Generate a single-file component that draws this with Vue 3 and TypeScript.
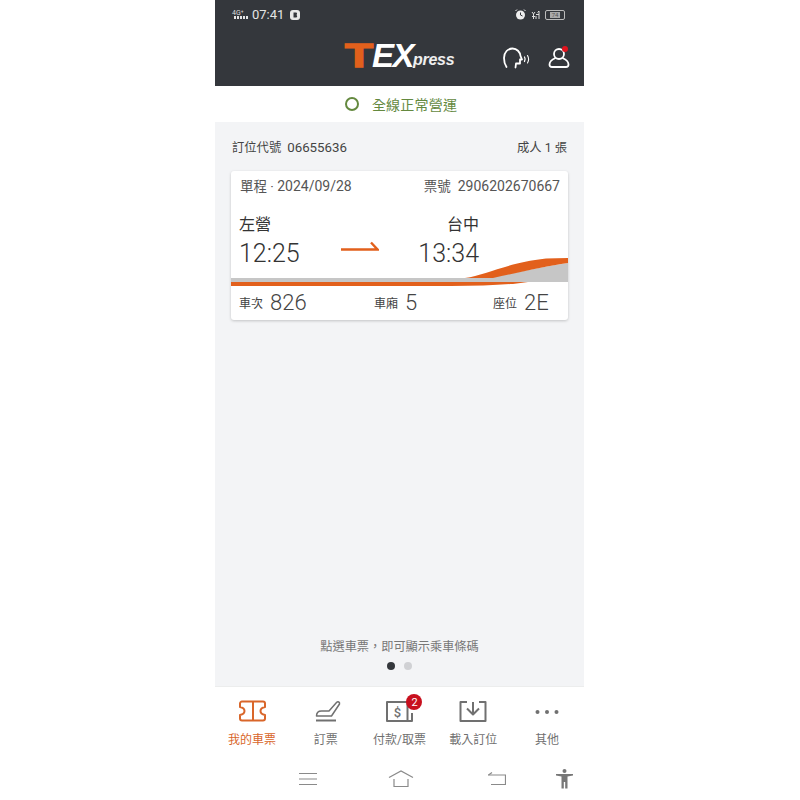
<script setup lang="ts">
const tabs = [
  { key: 'ticket', label: '我的車票', active: true },
  { key: 'seat', label: '訂票', active: false },
  { key: 'pay', label: '付款/取票', active: false, badge: 2 },
  { key: 'import', label: '載入訂位', active: false },
  { key: 'more', label: '其他', active: false },
];
</script>

<template>
  <div class="page">
    <div class="phone">
      <header class="header">
        <div class="status">
          <div class="status__left">
            <span class="signal">
              <span class="signal__net">4G⁺</span>
              <span class="signal__bars"><i></i><i></i><i></i><i></i><i></i></span>
            </span>
            <span class="status__time">07:41</span>
            <svg width="10" height="10" viewBox="0 0 10 10">
              <rect x="0" y="0" width="10" height="10" rx="3" fill="#e8e8e8" />
              <path d="M3.5 2.5h2.4a1.2 1.2 0 0 1 0 2.4 1.3 1.3 0 0 1 0 2.6H3.5z" fill="#34373c" />
            </svg>
          </div>
          <div class="status__right">
            <svg width="11" height="11" viewBox="0 0 11 11">
              <circle cx="5.5" cy="6" r="4.5" fill="#eee" />
              <path d="M5.5 3.5V6l2 1" stroke="#34373c" stroke-width="1" fill="none" />
              <path d="M0.5 2L2 .5M10.5 2L9 .5" stroke="#eee" stroke-width="1" />
            </svg>
            <svg width="9" height="11" viewBox="0 0 9 11" stroke="#ddd" stroke-width="1" fill="none">
              <path d="M1 3L2.5 5 4 3M2.5 5v5M5 10V7M8 10V2M6.500 3.500L8 2" />
              <path d="M5 5.500h3M1 7.500h3" />
            </svg>
            <span class="battery"><span class="battery__level">74</span></span>
          </div>
        </div>
        <div class="topbar">
          <div class="logo">
            <span class="logo__t">T</span>
            <span class="logo__ex">EX</span>
            <span class="logo__press">press</span>
          </div>
          <div class="topbar__actions">
            <svg width="27" height="22" viewBox="0 0 27 22" fill="none" stroke="#fff" stroke-width="1.800" stroke-linecap="round" stroke-linejoin="round">
              <path d="M3.500 20C1.500 17 1 14 1 11 1 5 5 1.500 9.500 1.500 14 1.500 17 5 17.500 9L19 12.500H17V16.500H13L12.500 20.500" />
              <path d="M21.500 10c.8 1.300.8 3 0 4.500" stroke-width="1.300" />
              <path d="M24.500 8.500c1.300 2.200 1.300 5.300 0 7.500" stroke-width="1.100" />
            </svg>
            <span class="user">
              <svg width="22" height="22" viewBox="0 0 22 22" fill="none" stroke="#fff" stroke-width="1.800">
                <circle cx="11" cy="7" r="5" />
                <path d="M7.500 11c-3.500 1.500-6 4-6 6.500 0 1.500.8 2.500 2.500 2.500h14c1.700 0 2.500-1 2.500-2.500 0-2.500-2.500-5-6-6.500" />
              </svg>
              <i class="user__dot"></i>
            </span>
          </div>
        </div>
      </header>

      <div class="notice">
        <span class="notice__ring"></span>
        <span class="notice__text">全線正常營運</span>
      </div>

      <main class="content">
        <div class="summary">
          <span>訂位代號<b class="num summary__code">06655636</b></span>
          <span>成人 <b class="num">1</b> 張</span>
        </div>

        <section class="card">
          <div class="card__head">
            <span>單程 · <b class="num">2024/09/28</b></span>
            <span>票號<b class="num card__ticket">2906202670667</b></span>
          </div>
          <div class="route">
            <div class="route__stop">
              <div class="route__name">左營</div>
              <div class="route__time">12:25</div>
            </div>
            <svg class="route__arrow" width="38" height="10" viewBox="0 0 38 10" fill="none">
              <path d="M0 8.500H36.500L30 1.500" stroke="#e2601c" stroke-width="2.400" />
            </svg>
            <div class="route__stop route__stop--end">
              <div class="route__name">台中</div>
              <div class="route__time">13:34</div>
            </div>
          </div>
          <div class="stripe">
            <svg width="337" height="32" viewBox="0 0 337 32">
              <rect x="0" y="23" width="337" height="4" fill="#c6c6c6" />
              <path d="M250 24C290 17 315 11 337 8V27H250Z" fill="#c6c6c6" />
              <path d="M0 27H297Q270 31 220 31H0Z" fill="#e2601c" />
              <path d="M234 23C255 20 275 8 315 3.500Q325 3 337 3V8C315 11 290 17 262 23Z" fill="#e2601c" />
            </svg>
          </div>
          <div class="card__foot">
            <span class="seat seat--car"><small>車次</small><b>826</b></span>
            <span class="seat seat--coach"><small>車廂</small><b>5</b></span>
            <span class="seat"><small>座位</small><b>2E</b></span>
          </div>
        </section>

        <div class="spacer"></div>
        <p class="hint">點選車票，即可顯示乘車條碼</p>
        <div class="dots">
          <i class="dots__dot dots__dot--on"></i>
          <i class="dots__dot"></i>
        </div>
      </main>

      <nav class="tabs">
        <div v-for="tab in tabs" :key="tab.key" class="tab" :class="{ 'tab--active': tab.active }">
          <span class="tab__icon">
            <svg width="30" height="24" viewBox="0 0 30 24" fill="none" stroke="currentColor" stroke-width="2" stroke-linejoin="round">
              <template v-if="tab.key === 'ticket'">
                <path d="M5 2.500H26a2 2 0 0 1 2 2V8c-6 1-6 7 0 8v3.500a2 2 0 0 1-2 2H5a2 2 0 0 1-2-2V16c6-1 6-7 0-8V4.500a2 2 0 0 1 2-2Z" />
                <path d="M16 2.500V21.500" />
              </template>
              <template v-else-if="tab.key === 'seat'">
                <path d="M5.500 17c0-3 2-5 5-5H18L25.500 3.500c1.500-1.500 3.500-.3 3 1.500L20.500 17Z" stroke-width="1.500" />
                <path d="M5 21.500H25" />
              </template>
              <template v-else-if="tab.key === 'pay'">
                <path d="M24 3H3V22H28V14" />
                <path d="M23.500 3V22" />
                <text x="13.500" y="17.500" class="tab__dollar">$</text>
              </template>
              <template v-else-if="tab.key === 'import'">
                <path d="M9 3H2.500V22H27.500V3H21" />
                <path d="M15 3V15M9 9.500L15 15.500L21 9.500" />
              </template>
              <template v-else>
                <circle cx="5.500" cy="13" r="2" fill="currentColor" stroke="none" />
                <circle cx="15" cy="13" r="2" fill="currentColor" stroke="none" />
                <circle cx="24.500" cy="13" r="2" fill="currentColor" stroke="none" />
              </template>
            </svg>
            <span v-if="tab.badge" class="tab__badge">{{ tab.badge }}</span>
          </span>
          <span class="tab__label">{{ tab.label }}</span>
        </div>
      </nav>

      <div class="sysnav">
        <svg class="sysnav__menu" width="18" height="14" viewBox="0 0 18 14" stroke="#8a8a8a" stroke-width="1.200">
          <path d="M0 1.500H18M0 7H18M0 12.500H18" />
        </svg>
        <svg class="sysnav__home" width="26" height="18" viewBox="0 0 26 18" fill="none" stroke="#8a8a8a" stroke-width="1.200">
          <path d="M1 7.500L13 1L25 7.500" />
          <path d="M6 9V16.500H20V9" />
        </svg>
        <svg class="sysnav__back" width="18" height="14" viewBox="0 0 18 14" fill="none" stroke="#8a8a8a" stroke-width="1.200">
          <path d="M0 3H17.500V12.500H3" />
          <path d="M4 .5L.5 3" />
        </svg>
        <svg class="sysnav__access" width="17" height="20" viewBox="0 0 17 20" fill="#777">
          <circle cx="8.500" cy="2" r="2" />
          <path d="M0 5H17V6.500L11.500 7.500V19.500H9.200V13H7.800V19.500H5.500V7.500L0 6.500Z" />
        </svg>
      </div>
    </div>
  </div>
</template>

<style scoped>
.page {
  display: flex;
  justify-content: center;
  width: 800px;
  height: 800px;
  background: #fff;
  font-family: Roboto, "Noto Sans CJK TC", sans-serif;
}

.phone {
  display: flex;
  flex-direction: column;
  width: 369px;
  height: 800px;
  margin-right: 1px;
}

.header {
  height: 86px;
  background: #34373c;
  color: #fff;
}

.status {
  display: flex;
  align-items: center;
  justify-content: space-between;
  height: 29px;
  padding: 0 19px 0 17px;
}

.status__left,
.status__right {
  display: flex;
  align-items: center;
}

.status__left {
  gap: 4px;
}

.status__right {
  gap: 5px;
}

.status__time {
  margin-right: 2px;
  font-size: 13px;
  color: #e4e4e4;
}

.signal {
  display: flex;
  flex-direction: column;
  width: 16px;
  line-height: 6px;
}

.signal__net {
  font-size: 7px;
  color: #ddd;
}

.signal__bars {
  display: flex;
  gap: 1px;
  justify-content: flex-end;
}

.signal__bars i {
  width: 2px;
  height: 3px;
  background: #e4e4e4;
}

.battery {
  display: flex;
  align-items: center;
  justify-content: center;
  width: 18px;
  height: 8px;
  border: 1px solid #bbb;
  border-radius: 2px;
}

.battery__level {
  font-size: 6px;
  line-height: 6px;
  padding: 0 2px;
  background: #aaa;
  color: #555;
}

.topbar {
  display: flex;
  align-items: center;
  height: 57px;
  padding: 0 14px 0 130px;
}

.topbar__actions {
  display: flex;
  align-items: center;
  gap: 18px;
  margin-left: auto;
}

.logo {
  display: flex;
  align-items: baseline;
  align-self: flex-start;
  height: 28px;
  margin-top: 12px;
  font-family: "Liberation Sans", sans-serif;
  font-style: italic;
  font-weight: 700;
}

.logo__t {
  display: inline-block;
  width: 27px;
  font-size: 34px;
  line-height: 28px;
  font-style: normal;
  font-weight: 700;
  color: #e2601c;
  -webkit-text-stroke: 1.5px #e2601c;
  transform: scaleX(1.350);
  transform-origin: left;
}

.logo__ex {
  font-size: 33px;
  line-height: 28px;
  letter-spacing: -1.5px;
  color: #fff;
}

.logo__press {
  margin-left: 0;
  font-size: 16px;
  line-height: 28px;
  letter-spacing: -0.3px;
  color: #eee;
  transform: translateY(-2px);
}

.user {
  position: relative;
  display: flex;
}

.user__dot {
  position: absolute;
  top: -1px;
  right: 2px;
  width: 6px;
  height: 6px;
  border-radius: 50%;
  background: #e0131e;
}

.notice {
  display: flex;
  align-items: center;
  justify-content: center;
  gap: 13px;
  height: 36px;
  padding-left: 3px;
  background: #fff;
}

.notice__ring {
  width: 14px;
  height: 14px;
  box-sizing: border-box;
  border: 2px solid #64893f;
  border-radius: 50%;
}

.notice__text {
  font-size: 14px;
  letter-spacing: 0.2px;
  color: #64893f;
}

.content {
  flex: 1;
  display: flex;
  flex-direction: column;
  padding: 0 16px;
  background: #f3f4f6;
}

.num {
  font-weight: 400;
  font-family: Roboto, sans-serif;
}

.summary {
  display: flex;
  align-items: center;
  justify-content: space-between;
  height: 49px;
  padding: 0 1px;
  font-size: 12.3px;
  color: #444;
}

.summary__code {
  margin-left: 6px;
  font-size: 13.3px;
}

.card {
  display: flex;
  flex-direction: column;
  height: 149px;
  background: #fff;
  border-radius: 3px;
  box-shadow: 0 1px 3px rgba(0, 0, 0, 0.2);
}

.card__head {
  display: flex;
  align-items: center;
  justify-content: space-between;
  height: 27px;
  padding: 0 8px 0 9px;
  font-size: 13.5px;
  color: #555;
}

.card__head .num {
  font-size: 14px;
}

.card__ticket {
  margin-left: 7px;
}

.route {
  display: flex;
  align-items: flex-end;
  height: 71px;
  padding-left: 8px;
}

.route__stop {
  width: 102px;
}

.route__stop--end {
  width: 100px;
  text-align: right;
}

.route__name {
  margin-bottom: 3px;
  font-size: 16px;
  line-height: 22px;
  color: #333;
}

.route__time {
  font-size: 25px;
  font-weight: 300;
  line-height: 30px;
  color: #333;
}

.route__arrow {
  margin-bottom: 18px;
}

.stripe {
  position: relative;
  height: 18px;
}

.stripe svg {
  position: absolute;
  left: 0;
  bottom: 0;
}

.card__foot {
  display: flex;
  align-items: center;
  height: 33px;
  padding: 0 0 2px 8px;
  box-sizing: border-box;
  color: #444;
}

.seat {
  display: flex;
  align-items: center;
  gap: 7px;
}

.seat--car {
  width: 135px;
}

.seat--coach {
  width: 119px;
}

.seat small {
  font-size: 12px;
}

.seat b {
  font-size: 22px;
  font-weight: 300;
  line-height: 24px;
}

.spacer {
  flex: 1;
}

.hint {
  margin: 0 0 7px;
  font-size: 12.2px;
  line-height: 16px;
  text-align: center;
  color: #777;
}

.dots {
  display: flex;
  justify-content: center;
  gap: 9px;
  height: 16px;
  margin-bottom: 8px;
}

.dots__dot {
  width: 8px;
  height: 8px;
  border-radius: 50%;
  background: #d0d1d4;
}

.dots__dot--on {
  background: #34373c;
}

.tabs {
  display: grid;
  grid-template-columns: repeat(5, 1fr);
  height: 74px;
  background: #fff;
  border-top: 1px solid #eceded;
  box-sizing: border-box;
}

.tab {
  display: flex;
  flex-direction: column;
  align-items: center;
  padding-top: 12px;
  color: #707070;
}

.tab--active {
  color: #d9662a;
}

.tab__icon {
  position: relative;
  display: flex;
  height: 24px;
}

.tab__dollar {
  font-family: Roboto, sans-serif;
  font-size: 13px;
  font-weight: 500;
  text-anchor: middle;
  fill: currentColor;
  stroke: none;
}

.tab__badge {
  position: absolute;
  top: -5px;
  right: -8px;
  display: flex;
  align-items: center;
  justify-content: center;
  width: 16px;
  height: 16px;
  border-radius: 50%;
  background: #c8101e;
  color: #fff;
  font-size: 11px;
}

.tab__label {
  margin-top: 9px;
  font-size: 12px;
  line-height: 16px;
}

.sysnav {
  display: flex;
  align-items: center;
  height: 40px;
  padding: 0 0 2px 84px;
  box-sizing: border-box;
  background: #fff;
}

.sysnav__home {
  margin-left: 71px;
}

.sysnav__back {
  margin-left: 74px;
}

.sysnav__access {
  margin-left: 50px;
}
</style>
